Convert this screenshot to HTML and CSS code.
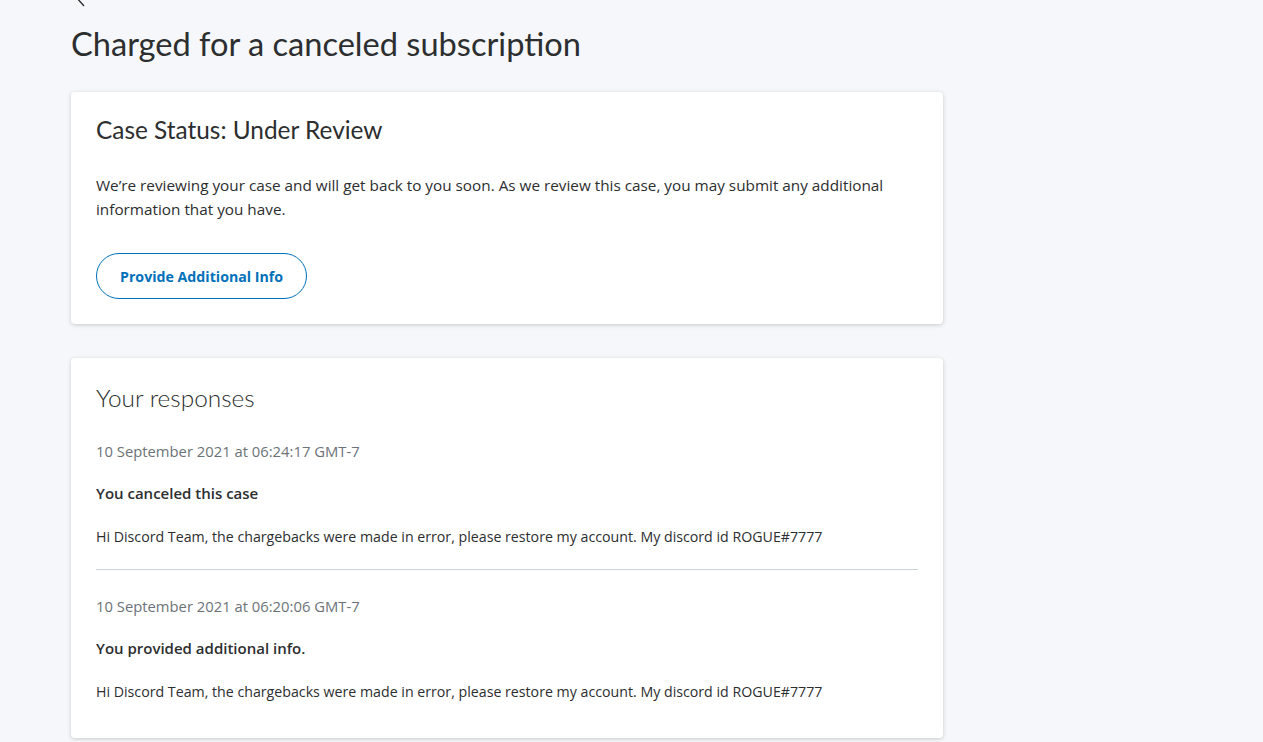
FILE: index.html
```html
<!DOCTYPE html>
<html lang="en">
<head>
  <meta charset="UTF-8" />
  <meta name="viewport" content="width=device-width, initial-scale=1" />
  <title>Charged for a canceled subscription</title>
  <link rel="stylesheet" href="styles.css">
</head>
<body>
  <div class="page">
    <a class="back" href="#">
      <svg width="12" height="20" viewBox="0 0 12 20"><path d="M10 1 L2 10 L10 19" fill="none" stroke="#2c2e2f" stroke-width="1.4"/></svg>
    </a>
    <h1>Charged for a canceled subscription</h1>

    <div class="card">
      <h2>Case Status: Under Review</h2>
      <p class="intro">We’re reviewing your case and will get back to you soon. As we review this case, you may submit any additional information that you have.</p>
      <button type="button">Provide Additional Info</button>
    </div>

    <div class="card responses">
      <h2 class="light">Your responses</h2>
      <div class="response">
        <div class="date">10 September 2021 at 06:24:17 GMT-7</div>
        <div class="title">You canceled this case</div>
        <div class="msg">Hi Discord Team, the chargebacks were made in error, please restore my account. My discord id ROGUE#7777</div>
      </div>
      <div class="response">
        <div class="date">10 September 2021 at 06:20:06 GMT-7</div>
        <div class="title">You provided additional info.</div>
        <div class="msg">Hi Discord Team, the chargebacks were made in error, please restore my account. My discord id ROGUE#7777</div>
      </div>
    </div>
  </div>
</body>
</html>
```

FILE: styles.css
```css
body {
  font-family: "Open Sans", Lato, Arial, sans-serif;
  background-color: #f5f7fa;
  color: #2c2e2f;
  margin: 0;
}
.page {
  width: 872px;
  padding-left: 71px;
}
.back {
  display: block;
  margin-top: -13px;
  margin-left: 3px;
  height: 20px;
}
h1 {
  font-family: Lato, "Open Sans", sans-serif;
  font-size: 32.6px;
  font-weight: 400;
  margin: 17px 0 28px;
  line-height: 40px;
}
.card {
  background: white;
  border-radius: 4px;
  box-shadow: 0 1px 4px rgba(0,0,0,0.18);
  padding: 22px 25px 25px;
  margin-bottom: 34px;
}
.card.responses {
  padding-top: 24px;
  padding-bottom: 14px;
}
h2 {
  font-family: Lato, "Open Sans", sans-serif;
  font-size: 24.4px;
  font-weight: 400;
  margin: 0;
  line-height: 32px;
}
h2.light {
  font-weight: 300;
}
.intro {
  font-size: 15.3px;
  line-height: 24px;
  margin: 27px 0 32px;
}
button {
  font-family: inherit;
  background: white;
  color: #0070ba;
  border: 1px solid #0070ba;
  border-radius: 23px;
  font-size: 14.2px;
  font-weight: 700;
  padding: 0 23px;
  height: 46px;
  cursor: pointer;
}
.response {
  padding: 27px 0 22px;
}
.response:last-child {
  padding-bottom: 22px;
}
.response + .response {
  border-top: 1px solid #cbd2d6;
  padding-top: 26px;
}
.date {
  color: #6c7378;
  font-size: 14.8px;
  line-height: 20px;
}
.title {
  font-size: 15px;
  font-weight: 600;
  margin-top: 21px;
  line-height: 22px;
}
.msg {
  font-size: 14.2px;
  line-height: 20px;
  margin-top: 23px;
}
```
